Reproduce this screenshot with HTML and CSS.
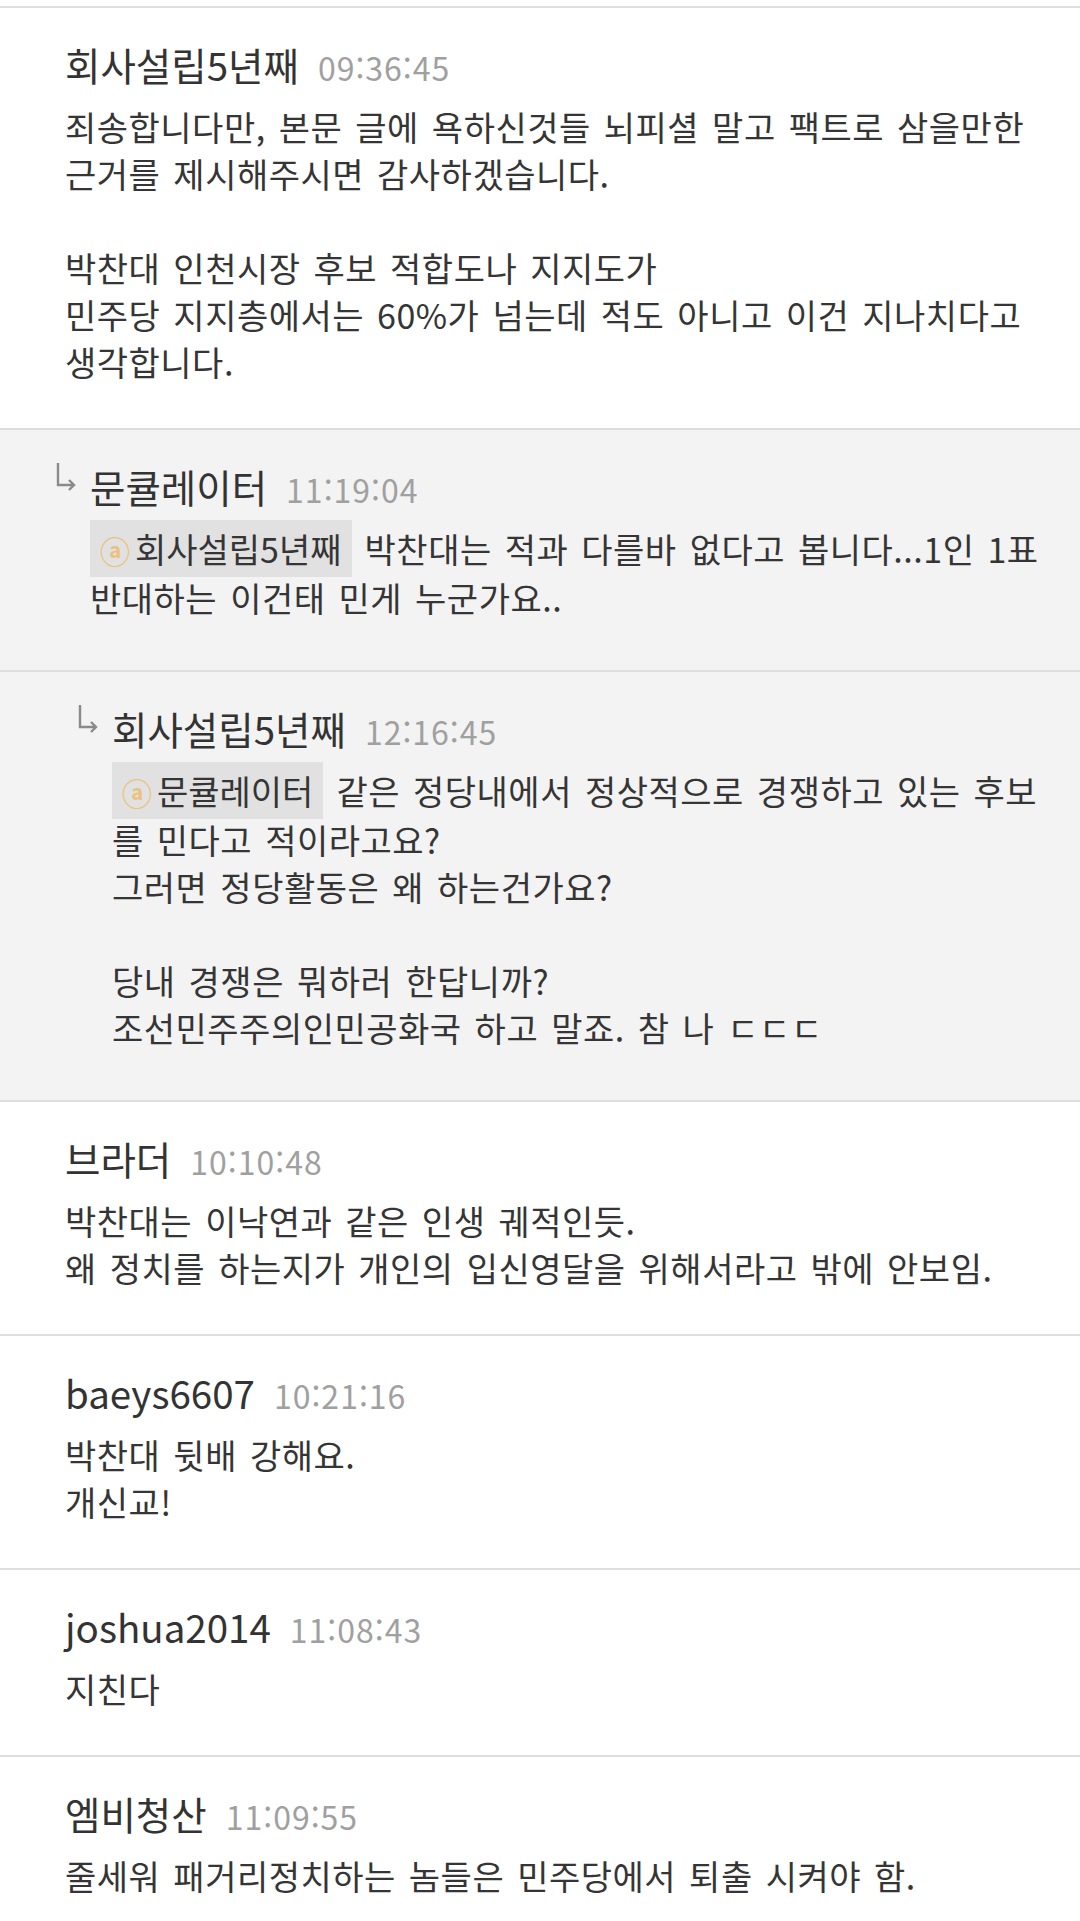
FILE: index.html
```html
<!DOCTYPE html>
<html lang="ko">
<head>
  <meta charset="UTF-8" />
  <title>댓글</title>
  <meta name="viewport" content="width=device-width, initial-scale=1.0" />
  <link rel="stylesheet" href="styles.css">
</head>
<body>
  <div class="comments">

    <div class="comment">
      <div class="head">
        <span class="name">회사설립5년째</span>
        <span class="time">09:36:45</span>
      </div>
      <p class="text">죄송합니다만, 본문 글에 욕하신것들 뇌피셜 말고 팩트로 삼을만한<br>근거를 제시해주시면 감사하겠습니다.<br><br>박찬대 인천시장 후보 적합도나 지지도가<br>민주당 지지층에서는 60%가 넘는데 적도 아니고 이건 지나치다고<br>생각합니다.</p>
    </div>

    <div class="comment reply">
      <div class="head">
        <svg class="arrow" width="22" height="30" viewBox="0 0 22 30"><path d="M3 0 V22 H19 M14 17 L19 22 L14 27" /></svg>
        <span class="name">문큘레이터</span>
        <span class="time">11:19:04</span>
      </div>
      <p class="text"><span class="mention"><span class="at">ⓐ</span>회사설립5년째</span> 박찬대는 적과 다를바 없다고 봅니다...1인 1표<br>반대하는 이건태 민게 누군가요..</p>
    </div>

    <div class="comment reply deep">
      <div class="head">
        <svg class="arrow" width="22" height="30" viewBox="0 0 22 30"><path d="M3 0 V22 H19 M14 17 L19 22 L14 27" /></svg>
        <span class="name">회사설립5년째</span>
        <span class="time">12:16:45</span>
      </div>
      <p class="text"><span class="mention"><span class="at">ⓐ</span>문큘레이터</span> 같은 정당내에서 정상적으로 경쟁하고 있는 후보<br>를 민다고 적이라고요?<br>그러면 정당활동은 왜 하는건가요?<br><br>당내 경쟁은 뭐하러 한답니까?<br>조선민주주의인민공화국 하고 말죠. 참 나 ㄷㄷㄷ</p>
    </div>

    <div class="comment">
      <div class="head">
        <span class="name">브라더</span>
        <span class="time">10:10:48</span>
      </div>
      <p class="text">박찬대는 이낙연과 같은 인생 궤적인듯.<br>왜 정치를 하는지가 개인의 입신영달을 위해서라고 밖에 안보임.</p>
    </div>

    <div class="comment">
      <div class="head">
        <span class="name">baeys6607</span>
        <span class="time">10:21:16</span>
      </div>
      <p class="text">박찬대 뒷배 강해요.<br>개신교!</p>
    </div>

    <div class="comment">
      <div class="head">
        <span class="name">joshua2014</span>
        <span class="time">11:08:43</span>
      </div>
      <p class="text">지친다</p>
    </div>

    <div class="comment">
      <div class="head">
        <span class="name">엠비청산</span>
        <span class="time">11:09:55</span>
      </div>
      <p class="text">줄세워 패거리정치하는 놈들은 민주당에서 퇴출 시켜야 함.</p>
    </div>

  </div>
</body>
</html>
```

FILE: styles.css
```css
body {
  margin: 0;
  background: #fff;
  font-family: "Noto Sans CJK KR", "Noto Sans", sans-serif;
  color: #353535;
  overflow: hidden;
}
.comments {
  padding-top: 6px;
}
.comment {
  border-top: 2px solid #dedede;
  padding: 30px 10px 43px 65px;
}
.reply {
  background: #f3f3f3;
  padding-left: 90px;
  padding-bottom: 49px;
}
.deep {
  padding-left: 112px;
}
.head {
  display: flex;
  align-items: baseline;
  height: 52px;
  line-height: 52px;
}
.name {
  font-size: 38.5px;
  color: #333;
}
.time {
  font-size: 32px;
  color: #a0a0a0;
  margin-left: 19px;
  letter-spacing: 1px;
}
.arrow {
  align-self: flex-start;
  margin: 3px 13px 0 -35px;
  fill: none;
  stroke: #8a8a8a;
  stroke-width: 2.4;
}
.text {
  margin: 13px 0 0;
  font-size: 34px;
  line-height: 47px;
  letter-spacing: 0.5px;
  word-spacing: 3px;
  white-space: nowrap;
}
.mention {
  background: #e1e1e1;
  padding: 4px 10px;
  word-spacing: 0;
  letter-spacing: 0;
}
.at {
  font-size: 30px;
  font-weight: 700;
  color: #eac17d;
  margin-right: 5px;
}
```
